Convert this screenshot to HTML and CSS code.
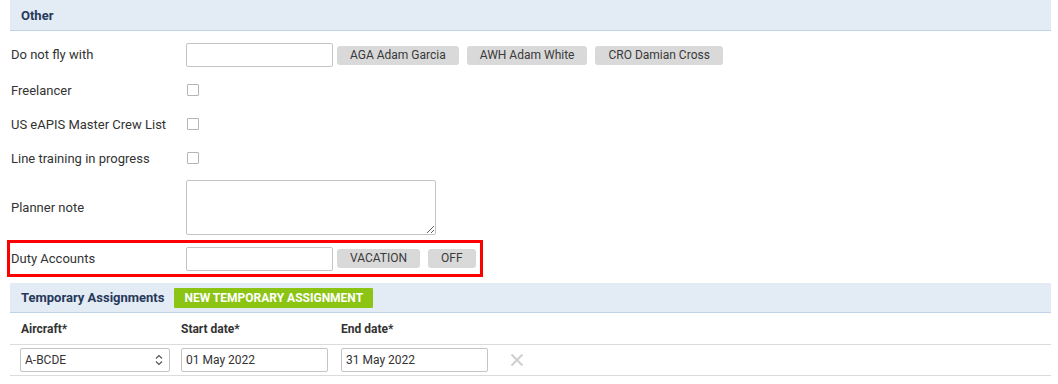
FILE: index.html
```html
<!DOCTYPE html>
<html>
<head>
<meta charset="utf-8">
<link rel="stylesheet" href="styles.css">
</head>
<body>
<div class="page">
  <div class="section-head"><span class="head-title">Other</span></div>

  <div class="row r-input">
    <div class="lbl">Do not fly with</div>
    <div class="field">
      <div class="txt"></div>
      <span class="tag first">AGA Adam Garcia</span>
      <span class="tag">AWH Adam White</span>
      <span class="tag">CRO Damian Cross</span>
    </div>
  </div>

  <div class="row r-check">
    <div class="lbl">Freelancer</div>
    <div class="field"><span class="chk"></span></div>
  </div>
  <div class="row r-check">
    <div class="lbl">US eAPIS Master Crew List</div>
    <div class="field"><span class="chk"></span></div>
  </div>
  <div class="row r-check">
    <div class="lbl">Line training in progress</div>
    <div class="field"><span class="chk"></span></div>
  </div>

  <div class="row r-note">
    <div class="lbl">Planner note</div>
    <div class="field"><textarea class="note"></textarea></div>
  </div>

  <div class="row r-duty highlight">
    <div class="lbl">Duty Accounts</div>
    <div class="field">
      <div class="txt"></div>
      <span class="tag first">VACATION</span>
      <span class="tag">OFF</span>
    </div>
  </div>

  <div class="section-head head2">
    <span class="head-title">Temporary Assignments</span>
    <span class="btn-green">NEW TEMPORARY ASSIGNMENT</span>
  </div>

  <div class="grid-head">
    <div class="col">Aircraft*</div>
    <div class="col">Start date*</div>
    <div class="col">End date*</div>
  </div>
  <div class="grid-row">
    <div class="col">
      <div class="sel">A-BCDE
        <svg class="updown" width="8" height="12" viewBox="0 0 8 12"><path d="M1 4.5 L4 1.5 L7 4.5 M1 7.5 L4 10.5 L7 7.5" fill="none" stroke="#555" stroke-width="1.2"/></svg>
      </div>
    </div>
    <div class="col"><div class="date">01 May 2022</div></div>
    <div class="col"><div class="date">31 May 2022</div></div>
    <div class="col-x">
      <svg width="14" height="14" viewBox="0 0 14 14"><path d="M1.5 1.5 L12.5 12.5 M12.5 1.5 L1.5 12.5" stroke="#cfcfcf" stroke-width="2"/></svg>
    </div>
  </div>
</div>
</body>
</html>
```
FILE: styles.css
```css
* { box-sizing: border-box; }
body {
  margin: 0;
  font-family: Roboto, "Liberation Sans", Arial, sans-serif;
  font-size: 12px;
  color: #333;
  background: #fff;
}
.page {
  margin-left: 10px;
  width: 1041px;
}
.section-head {
  height: 31px;
  background: #e3ebf5;
  border-bottom: 1px solid #bfd2e8;
  display: flex;
  align-items: center;
  padding-left: 11px;
}
.head-title {
  font-weight: bold;
  color: #26395a;
  font-size: 13px;
}
.row {
  display: flex;
  align-items: center;
}
.lbl {
  width: 176px;
  padding-left: 1px;
  flex: none;
  font-size: 13px;
  color: #333;
}
.field {
  display: flex;
  align-items: center;
}
.r-input {
  height: 42px;
  align-items: flex-start;
  padding-top: 12px;
}
.r-input .lbl { line-height: 24px; }
.r-check { height: 34px; }
.txt {
  width: 147px;
  height: 24px;
  border: 1px solid #c4c4c4;
  border-radius: 2px;
  background: #fff;
}
.tag {
  height: 19px;
  line-height: 19px;
  background: #d9d9d9;
  border-radius: 3px;
  padding: 0 13px;
  margin-left: 8px;
  color: #3a3a3a;
  white-space: nowrap;
}
.tag.first { margin-left: 4px; }
.chk {
  display: block;
  width: 12px;
  height: 12px;
  border: 1px solid #b5b5b5;
  border-radius: 1px;
  margin-left: 1px;
  background: #fff;
}
.r-note {
  height: 65px;
  padding-top: 5px;
  padding-bottom: 5px;
}
.note {
  width: 250px;
  height: 55px;
  border: 1px solid #c4c4c4;
  border-radius: 2px;
  margin: 0;
  padding: 2px;
  font-family: inherit;
  display: block;
}
.highlight {
  width: fit-content;
  height: 37px;
  margin-left: -3px;
  border: 3px solid #ff0000;
  padding-right: 4px;
}
.head2 {
  margin-top: 6px;
  height: 30px;
}
.btn-green {
  margin-left: 10px;
  height: 20px;
  line-height: 20px;
  background: #8cc414;
  color: #fff;
  font-weight: bold;
  padding: 0 10px;
  border-radius: 1px;
}
.grid-head {
  display: flex;
  align-items: center;
  height: 32px;
  border-bottom: 1px solid #dcdcdc;
  font-weight: bold;
  font-size: 12px;
  color: #333;
  padding-left: 11px;
}
.grid-head .col { width: 160px; }
.grid-row {
  display: flex;
  align-items: center;
  height: 31px;
  border-bottom: 1px solid #dcdcdc;
  padding-left: 10px;
}
.grid-row .col { width: 160px; }
.grid-row .col:nth-child(2), .grid-row .col:nth-child(3) { padding-left: 1px; }
.sel {
  width: 150px;
  height: 24px;
  border: 1px solid #c4c4c4;
  border-radius: 2px;
  display: flex;
  align-items: center;
  justify-content: space-between;
  padding: 0 6px 0 4px;
}
.date {
  width: 147px;
  height: 24px;
  border: 1px solid #c4c4c4;
  border-radius: 2px;
  display: flex;
  align-items: center;
  padding-left: 4px;
}
.col-x {
  margin-left: 10px;
  display: flex;
  align-items: center;
}
.col-x svg { display: block; }
```
